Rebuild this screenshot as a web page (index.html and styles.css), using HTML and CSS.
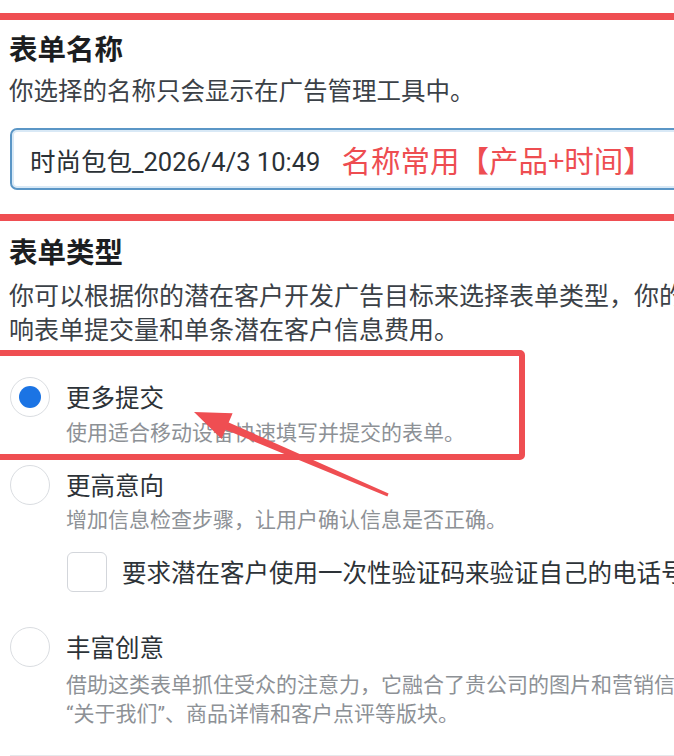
FILE: index.html
```html
<!DOCTYPE html>
<html lang="zh-CN">
<head>
<meta charset="utf-8">
<title>表单</title>
<link rel="stylesheet" href="styles.css">
</head>
<body>
<div class="page">
  <section class="sec-name">
    <h2 class="title">表单名称</h2>
    <p class="lead">你选择的名称只会显示在广告管理工具中。</p>
    <div class="input"><span class="value">时尚包包_2026/4/3 10:49</span><span class="note">名称常用【产品+时间】</span></div>
  </section>
  <section class="sec-type">
    <h2 class="title">表单类型</h2>
    <p class="lead para">你可以根据你的潜在客户开发广告目标来选择表单类型，你的表单类型会影<br>响表单提交量和单条潜在客户信息费用。</p>

    <div class="option opt-1">
      <span class="radio checked"></span>
      <div class="opt-title">更多提交</div>
      <div class="opt-desc">使用适合移动设备快速填写并提交的表单。</div>
    </div>

    <div class="option opt-2">
      <span class="radio"></span>
      <div class="opt-title">更高意向</div>
      <div class="opt-desc">增加信息检查步骤，让用户确认信息是否正确。</div>
      <div class="check-row">
        <span class="checkbox"></span>
        <span class="check-label">要求潜在客户使用一次性验证码来验证自己的电话号码。</span>
      </div>
    </div>

    <div class="option opt-3">
      <span class="radio"></span>
      <div class="opt-title">丰富创意</div>
      <div class="opt-desc multi">借助这类表单抓住受众的注意力，它融合了贵公司的图片和营销信息，以及<br>“关于我们”、商品详情和客户点评等版块。</div>
    </div>
  </section>
  <div class="sep"></div>
</div>

<div class="mark mark-name"></div>
<div class="mark mark-opt"></div>
<svg class="arrow" width="674" height="756" viewBox="0 0 674 756" xmlns="http://www.w3.org/2000/svg">
  <polygon points="194,412 232.6,413.2 228.7,422.4 388.6,493.6 387.4,496.4 225.5,429.8 221.6,439 " fill="#ef4e52"/>
</svg>
</body>
</html>
```

FILE: styles.css
```css
html, body {
  margin: 0;
  padding: 0;
  background: #ffffff;
}
body {
  width: 674px;
  height: 756px;
  overflow: hidden;
  position: relative;
  font-family: Roboto, "Noto Sans CJK SC", sans-serif;
  color: #1c2b33;
}
.page {
  padding-left: 9px;
  width: 760px;
}
.sec-name {
  padding-top: 30px;
}
.title {
  margin: 0;
  font-family: "Noto Sans CJK SC", sans-serif;
  font-size: 28.5px;
  line-height: 36px;
  font-weight: 700;
  color: #1c1e21;
}
.lead {
  margin: 7px 0 0;
  font-family: "Noto Sans CJK SC", sans-serif;
  font-size: 24.5px;
  line-height: 34px;
  color: #3b4147;
  white-space: nowrap;
}
.input {
  margin: 21px 0 0 1px;
  height: 62px;
  width: 740px;
  box-sizing: border-box;
  border: 2px solid #5b96c6;
  border-radius: 7px;
  box-shadow: inset 0 0 0 2px #d9e9f6;
  display: flex;
  align-items: center;
  padding-left: 18px;
}
.value {
  font-size: 25.5px;
  color: #2b3136;
  font-family: Roboto, "Noto Sans CJK SC", sans-serif;
}
.note {
  margin-left: 21px;
  font-family: "Noto Sans CJK SC", sans-serif;
  font-size: 29.5px;
  color: #ee4d51;
}
.sec-type .title {
  margin-top: 43px;
}
.para {
  margin-top: 8px;
  font-size: 25px;
}
.option {
  display: grid;
  grid-template-columns: 40px 1fr;
  column-gap: 16px;
  padding-left: 1px;
}
.radio {
  grid-row: 1;
  grid-column: 1;
  width: 40px;
  height: 40px;
  box-sizing: border-box;
  border: 1.5px solid #dadde1;
  border-radius: 50%;
  display: flex;
  align-items: center;
  justify-content: center;
}
.radio.checked::after {
  content: "";
  width: 22px;
  height: 22px;
  border-radius: 50%;
  background: #1b74e4;
}
.opt-title {
  grid-row: 1;
  grid-column: 2;
  font-family: "Noto Sans CJK SC", sans-serif;
  font-size: 24.5px;
  line-height: 40px;
  color: #2d3338;
}
.opt-desc {
  grid-column: 2;
  font-family: Roboto, "Noto Sans CJK SC", sans-serif;
  font-size: 21px;
  line-height: 28px;
  color: #8d9196;
  white-space: nowrap;
}
.opt-1 {
  margin-top: 32px;
}
.opt-1 .opt-desc {
  margin-top: 2px;
}
.opt-2 {
  margin-top: 18px;
}
.opt-2 .opt-desc {
  margin-top: 1px;
}
.check-row {
  grid-column: 2;
  margin-top: 18px;
  display: flex;
  align-items: center;
  gap: 15px;
  padding-left: 1px;
}
.checkbox {
  width: 40px;
  height: 40px;
  box-sizing: border-box;
  border: 1.5px solid #d3d6db;
  border-radius: 6px;
  flex: none;
}
.check-label {
  font-family: "Noto Sans CJK SC", sans-serif;
  font-size: 24.5px;
  line-height: 34px;
  color: #2d3338;
  white-space: nowrap;
}
.opt-3 {
  margin-top: 35px;
}
.opt-3 .opt-desc {
  margin-top: 4px;
  line-height: 29px;
}
.sep {
  margin: 26px 0 0 1px;
  height: 2px;
  width: 760px;
  background: #e6e8eb;
}
.mark {
  position: absolute;
  border: 7px solid #ef4e52;
  border-radius: 5px;
  pointer-events: none;
}
.mark-name {
  left: -20px;
  top: 13px;
  width: 710px;
  height: 194px;
}
.mark-opt {
  left: -20px;
  top: 350px;
  width: 533px;
  height: 98px;
  border-width: 6px;
}
.arrow {
  position: absolute;
  left: 0;
  top: 0;
  pointer-events: none;
}
```
